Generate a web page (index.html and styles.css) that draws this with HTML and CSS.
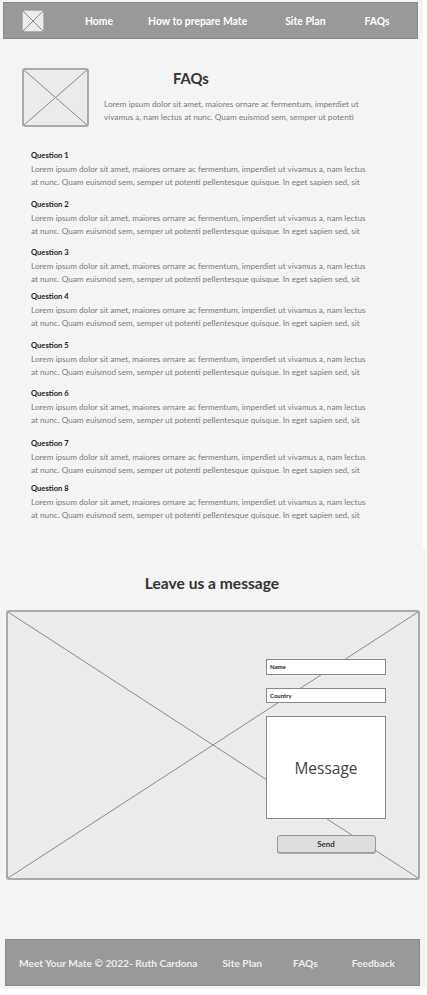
FILE: index.html
```html
<!DOCTYPE html>
<html lang="en">
<head>
    <meta charset="UTF-8">
    <meta name="viewport" content="width=device-width, initial-scale=1.0">
    <title>Meet Your Mate - FAQs</title>
    <link rel="stylesheet" href="styles.css">
</head>
<body>
    <div class="mate-top">
        <nav class="mate-nav">
            <div class="mate-logo">
                <svg viewBox="0 0 20 20" preserveAspectRatio="none"><path d="M0 0L20 20M20 0L0 20"/></svg>
            </div>
            <a href="#" class="nav-link nav-home">Home</a>
            <a href="#" class="nav-link nav-prepare">How to prepare Mate</a>
            <a href="#" class="nav-link nav-plan">Site Plan</a>
            <a href="#" class="nav-link nav-faqs">FAQs</a>
        </nav>

        <div class="faq-hero">
            <div class="placeholder hero-image">
                <svg viewBox="0 0 100 100" preserveAspectRatio="none"><path d="M0 0L100 100M100 0L0 100"/></svg>
            </div>
            <div class="hero-text">
                <h1>FAQs</h1>
                <p>Lorem ipsum dolor sit amet, maiores ornare ac fermentum, imperdiet ut vivamus a, nam lectus at nunc. Quam euismod sem, semper ut potenti</p>
            </div>
        </div>

        <div class="faq-list">
            <div class="faq-item">
                <h3>Question 1</h3>
                <p>Lorem ipsum dolor sit amet, maiores ornare ac fermentum, imperdiet ut vivamus a, nam lectus at nunc. Quam euismod sem, semper ut potenti pellentesque quisque. In eget sapien sed, sit</p>
            </div>
            <div class="faq-item">
                <h3>Question 2</h3>
                <p>Lorem ipsum dolor sit amet, maiores ornare ac fermentum, imperdiet ut vivamus a, nam lectus at nunc. Quam euismod sem, semper ut potenti pellentesque quisque. In eget sapien sed, sit</p>
            </div>
            <div class="faq-item faq-tight">
                <h3>Question 3</h3>
                <p>Lorem ipsum dolor sit amet, maiores ornare ac fermentum, imperdiet ut vivamus a, nam lectus at nunc. Quam euismod sem, semper ut potenti pellentesque quisque. In eget sapien sed, sit</p>
            </div>
            <div class="faq-item">
                <h3>Question 4</h3>
                <p>Lorem ipsum dolor sit amet, maiores ornare ac fermentum, imperdiet ut vivamus a, nam lectus at nunc. Quam euismod sem, semper ut potenti pellentesque quisque. In eget sapien sed, sit</p>
            </div>
            <div class="faq-item">
                <h3>Question 5</h3>
                <p>Lorem ipsum dolor sit amet, maiores ornare ac fermentum, imperdiet ut vivamus a, nam lectus at nunc. Quam euismod sem, semper ut potenti pellentesque quisque. In eget sapien sed, sit</p>
            </div>
            <div class="faq-item faq-wide">
                <h3>Question 6</h3>
                <p>Lorem ipsum dolor sit amet, maiores ornare ac fermentum, imperdiet ut vivamus a, nam lectus at nunc. Quam euismod sem, semper ut potenti pellentesque quisque. In eget sapien sed, sit</p>
            </div>
            <div class="faq-item faq-close">
                <h3>Question 7</h3>
                <p>Lorem ipsum dolor sit amet, maiores ornare ac fermentum, imperdiet ut vivamus a, nam lectus at nunc. Quam euismod sem, semper ut potenti pellentesque quisque. In eget sapien sed, sit</p>
            </div>
            <div class="faq-item">
                <h3>Question 8</h3>
                <p>Lorem ipsum dolor sit amet, maiores ornare ac fermentum, imperdiet ut vivamus a, nam lectus at nunc. Quam euismod sem, semper ut potenti pellentesque quisque. In eget sapien sed, sit</p>
            </div>
        </div>
    </div>

    <div class="mate-bottom">
        <h2 class="message-title">Leave us a message</h2>

        <div class="placeholder contact-box">
            <svg viewBox="0 0 100 100" preserveAspectRatio="none"><path d="M0 0L100 100M100 0L0 100"/></svg>
            <form class="contact-form" onsubmit="return false">
                <div class="contact-field">Name</div>
                <div class="contact-field contact-field-short">Country</div>
                <div class="contact-message">Message</div>
                <button class="contact-send">Send</button>
            </form>
        </div>

        <footer class="mate-footer">
            <span class="footer-copy">Meet Your Mate © 2022- Ruth Cardona</span>
            <a href="#" class="footer-link footer-plan">Site Plan</a>
            <a href="#" class="footer-link footer-faqs">FAQs</a>
            <a href="#" class="footer-link footer-feedback">Feedback</a>
        </footer>
    </div>
</body>
</html>
```

FILE: styles.css
```css
:root {
    --page: #f4f4f4;
    --bar: #999999;
    --bar-border: #8a8a8a;
    --box: #ebebeb;
    --box-border: #aaaaaa;
    --ink: #333333;
    --muted: #7a7a7a;
}

* {
    margin: 0;
    padding: 0;
    box-sizing: border-box;
    font-family: 'Lato', 'Open Sans', sans-serif;
}

body {
    background: #ffffff;
    width: 427px;
}

a {
    text-decoration: none;
}

/* placeholder boxes with the big X */
.placeholder {
    position: relative;
    background: var(--box);
    border: 2px solid var(--box-border);
    border-radius: 3px;
}

.placeholder svg {
    position: absolute;
    inset: 0;
    width: 100%;
    height: 100%;
}

.placeholder path {
    stroke: #8c8c8c;
    stroke-width: 1;
    fill: none;
    vector-effect: non-scaling-stroke;
}

.mate-top {
    width: 423px;
    height: 548px;
    background: var(--page);
    padding: 2px 5px 0 3px;
}

.mate-nav {
    height: 37px;
    background: var(--bar);
    border: 1px solid var(--bar-border);
    display: flex;
    align-items: center;
    padding-left: 18px;
}

.mate-logo {
    position: relative;
    width: 22px;
    height: 22px;
    background: var(--box);
    border: 1px solid #b5b5b5;
    border-radius: 3px;
}

.mate-logo svg {
    position: absolute;
    inset: 0;
    width: 100%;
    height: 100%;
}

.mate-logo path {
    stroke: #8c8c8c;
    fill: none;
    vector-effect: non-scaling-stroke;
}

.nav-link {
    color: #ffffff;
    font-size: 10.4px;
    font-weight: 700;
}

.nav-home { margin-left: 41px; }
.nav-prepare { margin-left: 35px; }
.nav-plan { margin-left: 38px; }
.nav-faqs { margin-left: 39px; }

.faq-hero {
    display: flex;
    margin-top: 29px;
    padding-left: 19px;
}

.hero-image {
    width: 67px;
    height: 59px;
    flex-shrink: 0;
}

.hero-text {
    margin-left: 15px;
    width: 266px;
}

.hero-text h1 {
    font-size: 14.8px;
    font-weight: 700;
    color: var(--ink);
    padding-left: 69px;
    line-height: 17px;
    margin-top: 2px;
}

.hero-text p {
    font-size: 8.2px;
    line-height: 13px;
    color: var(--muted);
    margin-top: 11px;
}

.faq-list {
    margin-top: 23px;
    padding-left: 28px;
    width: 369px;
}

.faq-item {
    margin-bottom: 9.5px;
}

.faq-item.faq-tight {
    margin-bottom: 5px;
}

.faq-item.faq-wide {
    margin-bottom: 11px;
}

.faq-item.faq-close {
    margin-bottom: 6px;
}

.faq-item h3 {
    font-size: 7.6px;
    font-weight: 700;
    color: #222222;
    line-height: 11px;
}

.faq-item p {
    font-size: 8.2px;
    line-height: 13px;
    color: var(--muted);
    margin-top: 2px;
}

.mate-bottom {
    width: 426px;
    height: 441px;
    background: var(--page);
    padding-top: 27px;
}

.message-title {
    text-align: center;
    font-size: 15.6px;
    font-weight: 700;
    color: var(--ink);
    line-height: 17px;
    padding-right: 2px;
}

.contact-box {
    width: 414px;
    height: 270px;
    margin: 18px 0 0 6px;
    display: flex;
    justify-content: flex-end;
    padding: 47px 32px 0 0;
}

.contact-form {
    position: relative;
    width: 120px;
    display: flex;
    flex-direction: column;
    align-items: center;
}

.contact-field {
    width: 100%;
    height: 16px;
    background: #ffffff;
    border: 1px solid #888888;
    font-size: 6px;
    font-weight: 700;
    color: #222222;
    line-height: 14px;
    padding-left: 3px;
    margin-bottom: 13px;
}

.contact-field-short {
    height: 15px;
    line-height: 13px;
}

.contact-message {
    width: 100%;
    height: 103px;
    background: #ffffff;
    border: 1px solid #888888;
    display: flex;
    align-items: center;
    justify-content: center;
    font-family: 'Open Sans', sans-serif;
    font-size: 15.5px;
    color: #444444;
}

.contact-send {
    margin-top: 16px;
    width: 99px;
    height: 18px;
    background: #dddddd;
    border: 1px solid #999999;
    border-radius: 3px;
    box-shadow: 0 1px 0 #aaaaaa;
    font-size: 8px;
    font-weight: 700;
    color: #333333;
}

.mate-footer {
    width: 415px;
    height: 47px;
    margin: 59px 0 0 5px;
    background: var(--bar);
    border: 1px solid var(--bar-border);
    display: flex;
    align-items: center;
    padding-left: 13px;
}

.footer-copy,
.footer-link {
    color: #eeeeee;
    font-size: 10.2px;
    font-weight: 700;
}

.footer-plan { margin-left: 25px; }
.footer-faqs { margin-left: 31px; }
.footer-feedback { margin-left: 34px; }
```
